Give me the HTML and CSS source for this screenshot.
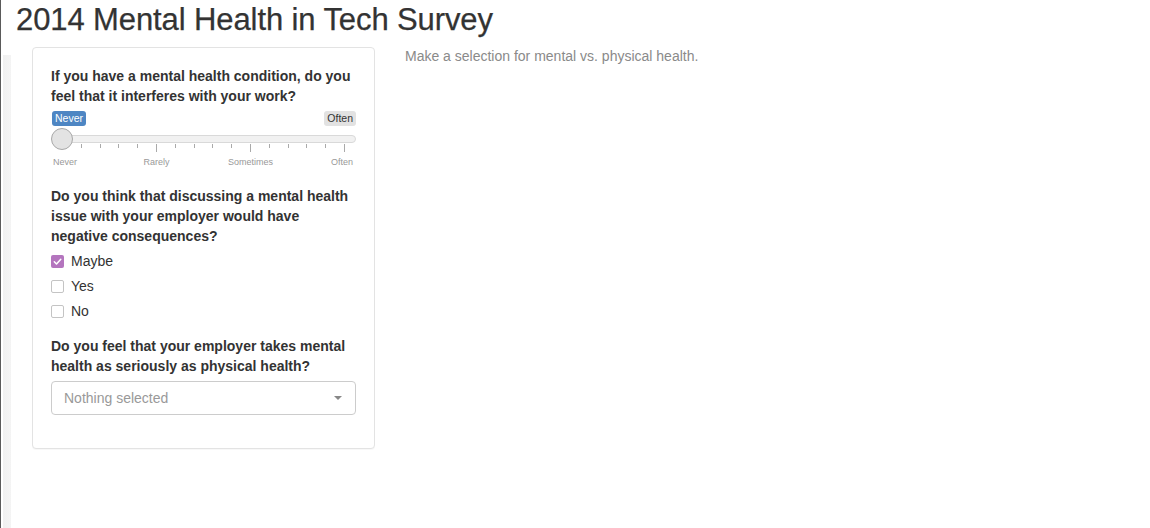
FILE: index.html
```html
<!DOCTYPE html>
<html lang="en">
<head>
<meta charset="utf-8">
<title>2014 Mental Health in Tech Survey</title>
<link rel="stylesheet" href="styles.css">
</head>
<body>
<div class="page">
  <h2 class="title">2014 Mental Health in Tech Survey</h2>
  <div class="row">
    <div class="panel">
      <div class="form-group">
        <label class="control-label">If you have a mental health condition, do you feel that it interferes with your work?</label>
        <div class="irs">
          <span class="irs-single">Never</span>
          <span class="irs-max">Often</span>
          <span class="irs-line"></span>
          <span class="irs-handle"></span>
          <div class="irs-grid">
            <span class="pol big"></span><span class="pol"></span><span class="pol"></span><span class="pol"></span><span class="pol"></span>
            <span class="pol big"></span><span class="pol"></span><span class="pol"></span><span class="pol"></span><span class="pol"></span>
            <span class="pol big"></span><span class="pol"></span><span class="pol"></span><span class="pol"></span><span class="pol"></span>
            <span class="pol big"></span>
          </div>
          <div class="irs-grid-text">
            <span class="gt gt-first"><span>Never</span></span>
            <span class="gt"><span>Rarely</span></span>
            <span class="gt"><span>Sometimes</span></span>
            <span class="gt gt-last"><span>Often</span></span>
          </div>
        </div>
      </div>

      <div class="form-group">
        <label class="control-label">Do you think that discussing a mental health issue with your employer would have negative consequences?</label>
        <div class="checks">
          <label class="check"><span class="box checked"><svg viewBox="0 0 13 13" width="13" height="13"><path d="M3.3 6.8 L5.5 9 L9.8 4.2" fill="none" stroke="#fff" stroke-width="1.5" stroke-linecap="round" stroke-linejoin="round"/></svg></span><span>Maybe</span></label>
          <label class="check"><span class="box"></span><span>Yes</span></label>
          <label class="check"><span class="box"></span><span>No</span></label>
        </div>
      </div>

      <div class="form-group last">
        <label class="control-label">Do you feel that your employer takes mental health as seriously as physical health?</label>
        <div class="select">
          <span class="placeholder">Nothing selected</span>
          <span class="caret"></span>
        </div>
      </div>
    </div>
    <div class="main">
      <p class="note">Make a selection for mental vs. physical health.</p>
    </div>
  </div>
</div>
</body>
</html>
```

FILE: styles.css
```css
html, body {
  margin: 0;
  padding: 0;
}
body {
  width: 1150px;
  height: 528px;
  overflow: hidden;
  font-family: "Liberation Sans", Arial, Helvetica, sans-serif;
  font-size: 14px;
  line-height: 20px;
  color: #333;
  background:
    linear-gradient(to right, #5a5a5a 0, #5a5a5a 1px, transparent 1px) no-repeat 0 0 / 2px 100%,
    linear-gradient(to right, #f0f0f0, #f4f4f4) no-repeat 3px 55px / 8px 480px,
    #fff;
}
.page {
  padding: 3px 0 0 16px;
}
.title {
  margin: 0;
  font-size: 31px;
  line-height: 34px;
  font-weight: normal;
  color: #333;
  letter-spacing: -0.1px;
  -webkit-text-stroke: 0.25px #333;
}
.row {
  display: flex;
  align-items: flex-start;
  gap: 30px;
  margin-top: 10px;
  padding-left: 16px;
}
.panel {
  width: 305px;
  padding: 18px;
  border: 1px solid #e3e3e3;
  border-radius: 4px;
  background: #fff;
  box-shadow: 0 1px 1px rgba(0,0,0,0.03);
}
.form-group {
  margin-bottom: 15px;
}
.control-label {
  display: block;
  font-weight: bold;
  margin-bottom: 5px;
}
.form-group:first-child .control-label {
  margin-bottom: 0;
}
/* slider */
.irs {
  position: relative;
  height: 65px;
}
.irs-single, .irs-max {
  position: absolute;
  top: 5px;
  font-size: 10.5px;
  line-height: 13px;
  padding: 1px 3px;
  border-radius: 3px;
}
.irs-single {
  left: 1px;
  background: #4e86c3;
  color: #fff;
}
.irs-max {
  right: 0;
  background: #e2e2e2;
  color: #333;
}
.irs-line {
  position: absolute;
  left: 1px;
  right: 0;
  top: 29px;
  height: 6px;
  background: #f1f1f1;
  border: 1px solid #d9d9d9;
  border-radius: 5px;
}
.irs-handle {
  position: absolute;
  left: 0;
  top: 22px;
  width: 20px;
  height: 20px;
  border-radius: 50%;
  background: #e3e3e3;
  border: 1px solid #a8a8a8;
}
.irs-grid {
  position: absolute;
  left: 11px;
  width: 283px;
  top: 38px;
  display: flex;
  justify-content: space-between;
  align-items: flex-start;
}
.pol {
  width: 1px;
  height: 4px;
  background: #aaa;
}
.pol.big {
  height: 8px;
}
.pol.big:first-child {
  opacity: 0;
}
.irs-grid-text {
  position: absolute;
  left: 11px;
  width: 283px;
  top: 51px;
  display: flex;
  justify-content: space-between;
  font-size: 9px;
  line-height: 11px;
  color: #999;
}
.gt {
  width: 1px;
  display: flex;
  justify-content: center;
  white-space: nowrap;
}
.gt-first {
  justify-content: flex-start;
}
.gt-first span {
  margin-left: -9px;
}
.gt-last {
  justify-content: flex-end;
}
.gt-last span {
  margin-right: -8px;
}
/* checkboxes */
.checks {
  display: flex;
  flex-direction: column;
  gap: 5px;
}
.check {
  display: flex;
  align-items: center;
  gap: 7px;
  height: 20px;
  font-weight: normal;
}
.box {
  width: 11px;
  height: 11px;
  border: 1px solid #c4c4c4;
  border-radius: 2px;
  background: #fff;
  display: block;
}
.box.checked {
  width: 13px;
  height: 13px;
  border: none;
  background: #b475be;
}
.box svg {
  display: block;
}
/* select */
.select {
  height: 32px;
  border: 1px solid #ccc;
  border-radius: 4px;
  display: flex;
  align-items: center;
  justify-content: space-between;
  padding: 0 13px 0 12px;
  background: #fff;
}
.placeholder {
  color: #999;
}
.caret {
  width: 0;
  height: 0;
  border-top: 4px solid #888;
  border-left: 4px solid transparent;
  border-right: 4px solid transparent;
}
/* main */
.main {
  flex: 1;
}
.note {
  margin: -1px 0 0 0;
  color: #8a8a8a;
}
```
